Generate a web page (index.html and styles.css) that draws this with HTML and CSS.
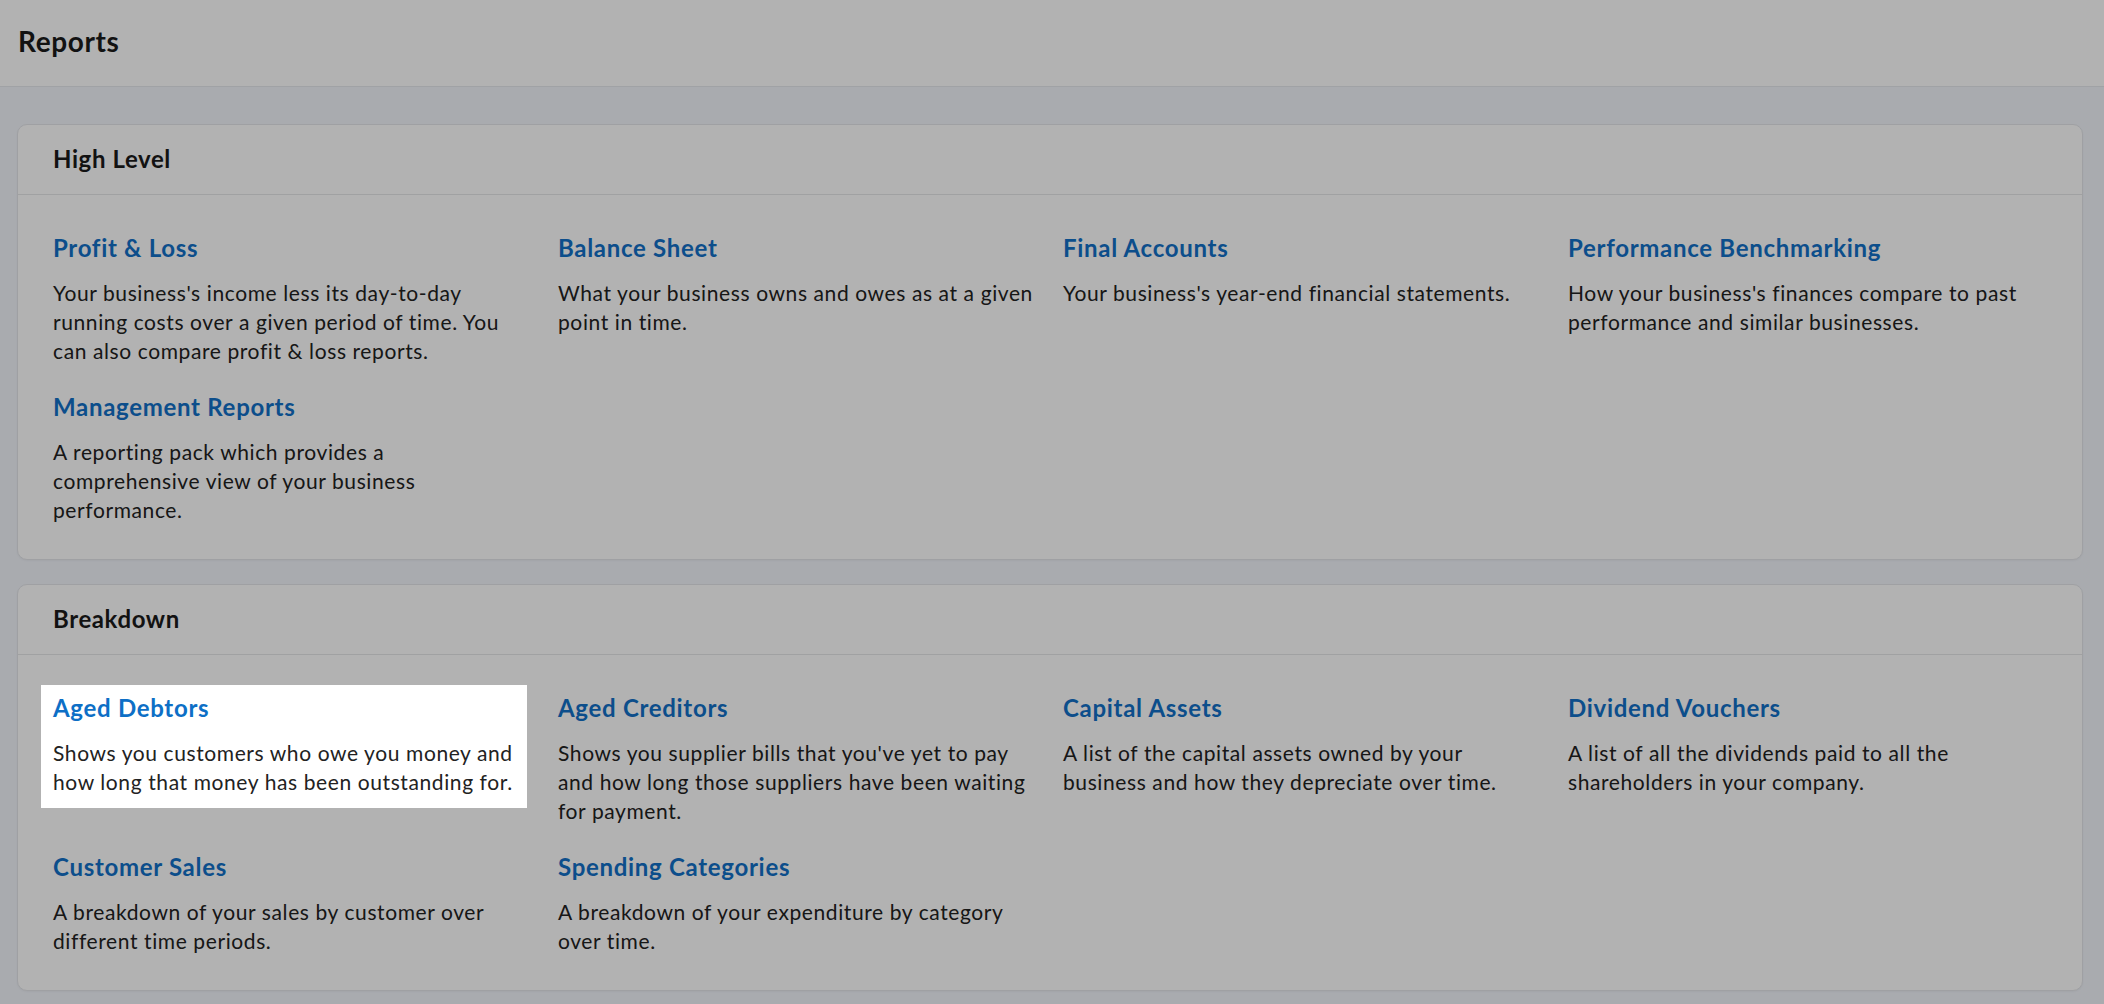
FILE: index.html
```html
<!DOCTYPE html>
<html lang="en">
<head>
<meta charset="utf-8">
<title>Reports</title>
<link rel="stylesheet" href="styles.css">
</head>
<body>
<header class="page-header">
  <h1 class="page-title">Reports</h1>
</header>
<main class="content">
  <section class="card">
    <h2 class="card-title">High Level</h2>
    <div class="card-body">
      <div class="report">
        <a class="report-link" href="#">Profit &amp; Loss</a>
        <p class="report-desc">Your business's income less its day-to-day running costs over a given period of time. You can also compare profit &amp; loss reports.</p>
      </div>
      <div class="report">
        <a class="report-link" href="#">Balance Sheet</a>
        <p class="report-desc">What your business owns and owes as at a given point in time.</p>
      </div>
      <div class="report">
        <a class="report-link" href="#">Final Accounts</a>
        <p class="report-desc">Your business's year-end financial statements.</p>
      </div>
      <div class="report">
        <a class="report-link" href="#">Performance Benchmarking</a>
        <p class="report-desc">How your business's finances compare to past performance and similar businesses.</p>
      </div>
      <div class="report">
        <a class="report-link" href="#">Management Reports</a>
        <p class="report-desc">A reporting pack which provides a comprehensive view of your business performance.</p>
      </div>
    </div>
  </section>
  <section class="card">
    <h2 class="card-title">Breakdown</h2>
    <div class="card-body">
      <div class="report spotlight">
        <a class="report-link" href="#">Aged Debtors</a>
        <p class="report-desc">Shows you customers who owe you money and how long that money has been outstanding for.</p>
      </div>
      <div class="report">
        <a class="report-link" href="#">Aged Creditors</a>
        <p class="report-desc">Shows you supplier bills that you've yet to pay and how long those suppliers have been waiting for payment.</p>
      </div>
      <div class="report">
        <a class="report-link" href="#">Capital Assets</a>
        <p class="report-desc">A list of the capital assets owned by your business and how they depreciate over time.</p>
      </div>
      <div class="report">
        <a class="report-link" href="#">Dividend Vouchers</a>
        <p class="report-desc">A list of all the dividends paid to all the shareholders in your company.</p>
      </div>
      <div class="report">
        <a class="report-link" href="#">Customer Sales</a>
        <p class="report-desc">A breakdown of your sales by customer over different time periods.</p>
      </div>
      <div class="report">
        <a class="report-link" href="#">Spending Categories</a>
        <p class="report-desc">A breakdown of your expenditure by category over time.</p>
      </div>
    </div>
  </section>
</main>
</body>
</html>
```

FILE: styles.css
```css
* { box-sizing: border-box; }

html, body {
  margin: 0;
  padding: 0;
}

body {
  font-family: Lato, "Open Sans", "Liberation Sans", sans-serif;
  color: #1e1e1e;
  background: #f2f5fb;
  min-height: 1004px;
  overflow: hidden;
}

.page-header {
  background: #ffffff;
  border-bottom: 1px solid #e6e8ec;
  height: 87px;
  padding: 24px 18px 0;
}

.page-title {
  margin: 0;
  font-size: 28px;
  line-height: 34px;
  font-weight: 700;
  letter-spacing: 0.6px;
  color: #1a1a1a;
}

.content {
  padding: 37px 21px 0 17px;
  display: flex;
  flex-direction: column;
  gap: 24px;
}

.card {
  background: #ffffff;
  border: 1px solid #e4e6ea;
  border-radius: 10px;
  box-shadow: 0 1px 2px rgba(0, 0, 0, 0.04);
}

.card-title {
  margin: 0;
  padding: 19px 35px 20px;
  font-size: 24px;
  line-height: 30px;
  font-weight: 700;
  letter-spacing: 0.6px;
  color: #1a1a1a;
  border-bottom: 1px solid #e6e7e9;
}

.card-body {
  display: grid;
  grid-template-columns: repeat(4, 1fr);
  align-items: start;
  column-gap: 26px;
  row-gap: 27px;
  padding: 38px 35px 35px 35px;
}

.report-link {
  display: block;
  font-size: 24px;
  line-height: 30px;
  font-weight: 700;
  letter-spacing: 0.7px;
  color: #1270c8;
  text-decoration: none;
}

.report-desc {
  margin: 15px 0 0;
  font-size: 21px;
  line-height: 29px;
  letter-spacing: 0.6px;
  color: #222222;
}

.spotlight {
  position: relative;
  z-index: 10;
}

.spotlight .report-link {
  color: #0d6fc6;
}

.spotlight::before {
  content: "";
  position: absolute;
  top: -8px;
  left: -12px;
  right: 5px;
  bottom: -12px;
  background: #ffffff;
  z-index: -1;
  box-shadow: 0 0 0 4000px rgba(0, 0, 0, 0.3);
}
```
